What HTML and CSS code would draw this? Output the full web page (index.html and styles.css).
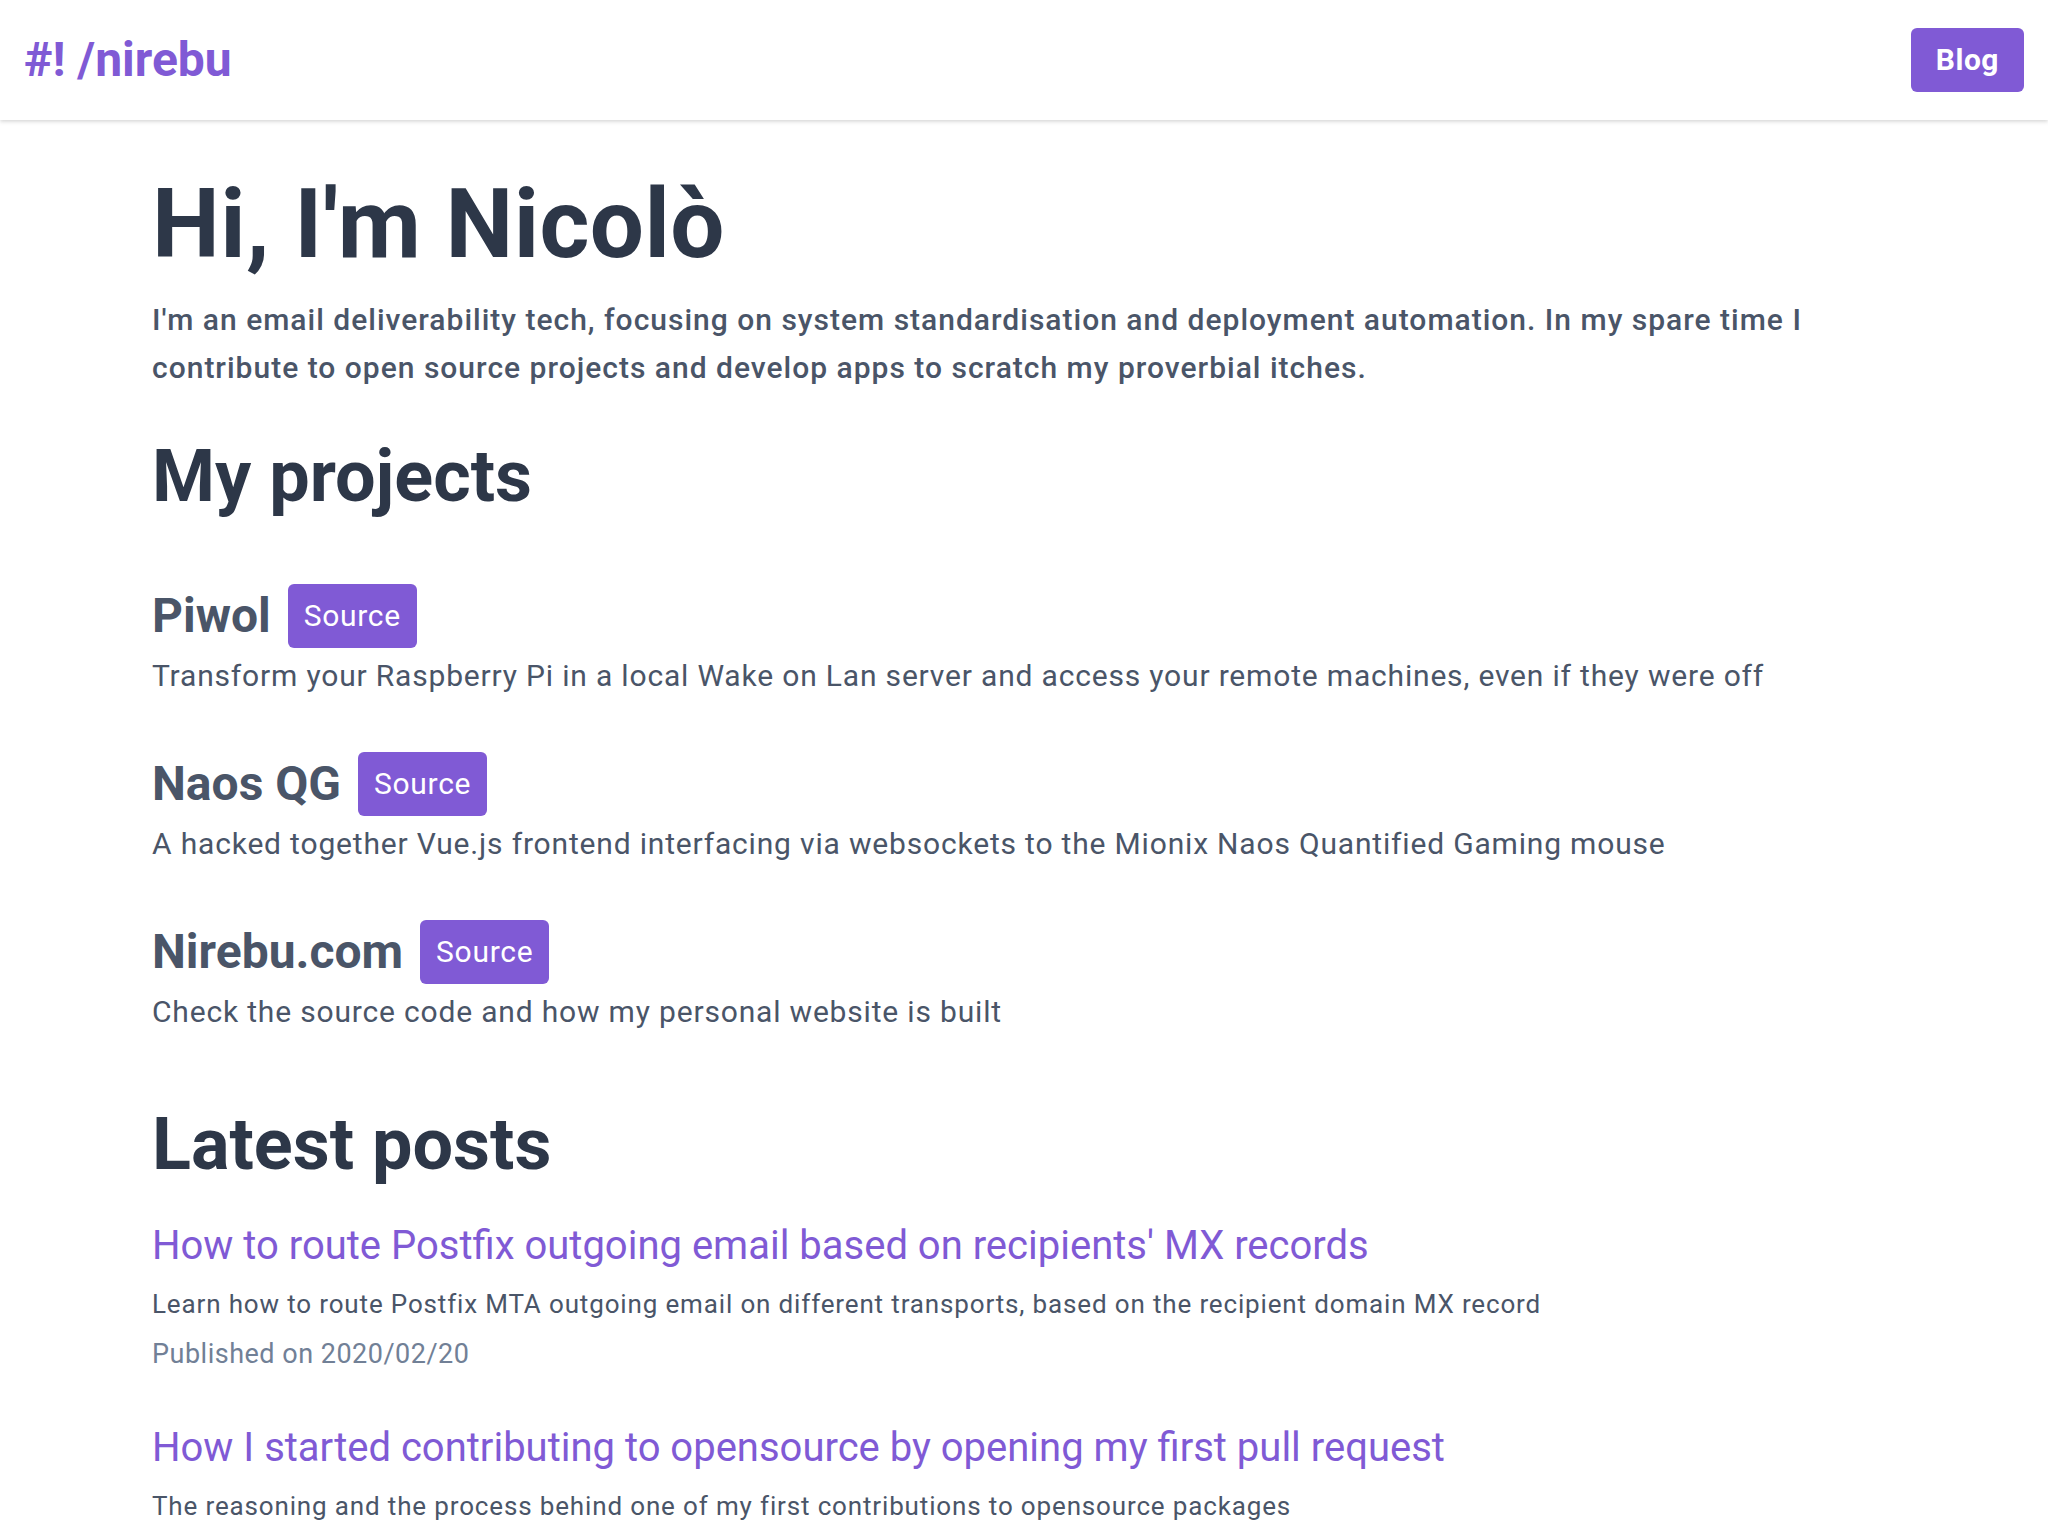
FILE: index.html
```html
<!DOCTYPE html>
<html lang="en">
<head>
<meta charset="utf-8">
<title>Nicolò - nirebu</title>
<link rel="stylesheet" href="styles.css">
</head>
<body>
<header class="topbar">
  <a class="logo" href="#">#! /nirebu</a>
  <a class="blog-btn" href="#">Blog</a>
</header>
<main class="content">
  <h1 class="hero-title">Hi, I'm Nicolò</h1>
  <p class="intro">I'm an email deliverability tech, focusing on system standardisation and deployment automation. In my spare time I contribute to open source projects and develop apps to scratch my proverbial itches.</p>

  <h2 class="section-title projects-title">My projects</h2>
  <section class="projects">
    <article class="project">
      <div class="project-head">
        <h3 class="project-name">Piwol</h3>
        <a class="source-badge" href="#">Source</a>
      </div>
      <p class="project-desc">Transform your Raspberry Pi in a local Wake on Lan server and access your remote machines, even if they were off</p>
    </article>
    <article class="project">
      <div class="project-head">
        <h3 class="project-name">Naos QG</h3>
        <a class="source-badge" href="#">Source</a>
      </div>
      <p class="project-desc">A hacked together Vue.js frontend interfacing via websockets to the Mionix Naos Quantified Gaming mouse</p>
    </article>
    <article class="project">
      <div class="project-head">
        <h3 class="project-name">Nirebu.com</h3>
        <a class="source-badge" href="#">Source</a>
      </div>
      <p class="project-desc">Check the source code and how my personal website is built</p>
    </article>
  </section>

  <h2 class="section-title posts-title">Latest posts</h2>
  <section class="posts">
    <article class="post">
      <a class="post-title" href="#">How to route Postfix outgoing email based on recipients' MX records</a>
      <p class="post-desc">Learn how to route Postfix MTA outgoing email on different transports, based on the recipient domain MX record</p>
      <p class="post-date">Published on 2020/02/20</p>
    </article>
    <article class="post">
      <a class="post-title" href="#">How I started contributing to opensource by opening my first pull request</a>
      <p class="post-desc">The reasoning and the process behind one of my first contributions to opensource packages</p>
      <p class="post-date">Published on 2020/01/12</p>
    </article>
  </section>
</main>
</body>
</html>
```

FILE: styles.css
```css
* { box-sizing: border-box; }

html, body {
  margin: 0;
  padding: 0;
  background: #ffffff;
  font-family: Roboto, "Liberation Sans", sans-serif;
  color: #4a5568;
}

a { text-decoration: none; }

h1, h2, h3, p { margin: 0; }

.topbar {
  height: 120px;
  display: flex;
  align-items: center;
  justify-content: space-between;
  padding: 0 24px;
  background: #ffffff;
  box-shadow: 0 1.5px 4.5px rgba(0, 0, 0, 0.1), 0 1.5px 3px rgba(0, 0, 0, 0.06);
  position: relative;
}

.logo {
  font-size: 48px;
  font-weight: 700;
  line-height: 56px;
  color: #805ad5;
}

.blog-btn {
  display: block;
  background: #805ad5;
  color: #ffffff;
  font-size: 30px;
  font-weight: 700;
  line-height: 40px;
  padding: 12px 25px;
  letter-spacing: 0.5px;
  border-radius: 6px;
}

.content {
  padding: 48px 152px 0;
}

.hero-title {
  font-size: 96px;
  line-height: 112px;
  font-weight: 700;
  letter-spacing: 0.4px;
  color: #2d3748;
}

.intro {
  margin-top: 16px;
  font-size: 30px;
  line-height: 48px;
  font-weight: 500;
  letter-spacing: 1px;
  color: #4a5568;
}

.section-title {
  font-size: 72px;
  line-height: 90px;
  font-weight: 700;
  color: #2d3748;
}

.projects-title { margin-top: 40px; }

.projects {
  display: flex;
  flex-direction: column;
  gap: 54px;
  margin-top: 62px;
}

.project-head {
  display: flex;
  align-items: center;
  gap: 17px;
}

.project-name {
  font-size: 48px;
  line-height: 64px;
  font-weight: 700;
  color: #4a5568;
}

.source-badge {
  display: block;
  background: #805ad5;
  color: #ffffff;
  font-size: 30px;
  line-height: 40px;
  letter-spacing: 0.7px;
  padding: 12px 16px;
  border-radius: 6px;
}

.project-desc {
  margin-top: 5px;
  font-size: 30px;
  line-height: 45px;
  letter-spacing: 0.82px;
  color: #4a5568;
}

.posts-title { margin-top: 66px; }

.posts {
  display: flex;
  flex-direction: column;
  gap: 44px;
  margin-top: 26px;
}

.post-title {
  display: block;
  font-size: 40px;
  line-height: 60px;
  color: #805ad5;
}

.post-desc {
  margin-top: 8px;
  font-size: 26px;
  line-height: 40px;
  letter-spacing: 0.85px;
  color: #4a5568;
}

.post-date {
  margin-top: 10px;
  font-size: 27px;
  line-height: 40px;
  letter-spacing: 0.5px;
  color: #718096;
}
```
